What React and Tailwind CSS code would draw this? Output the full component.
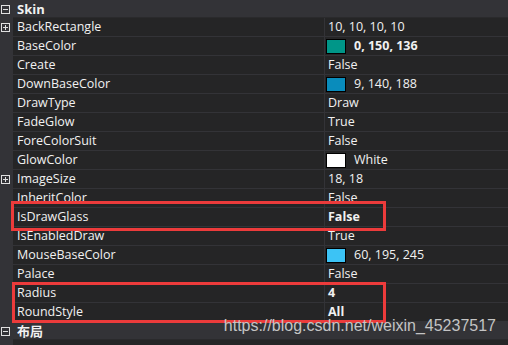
import React from "react";

const rows = [
  { k: "BackRectangle", v: "10, 10, 10, 10", plus: true },
  { k: "BaseColor", v: "0, 150, 136", c: "#009688", bold: true },
  { k: "Create", v: "False" },
  { k: "DownBaseColor", v: "9, 140, 188", c: "#098cbc" },
  { k: "DrawType", v: "Draw" },
  { k: "FadeGlow", v: "True" },
  { k: "ForeColorSuit", v: "False" },
  { k: "GlowColor", v: "White", c: "#ffffff" },
  { k: "ImageSize", v: "18, 18", plus: true },
  { k: "InheritColor", v: "False" },
  { k: "IsDrawGlass", v: "False", bold: true },
  { k: "IsEnabledDraw", v: "True" },
  { k: "MouseBaseColor", v: "60, 195, 245", c: "#3cc3f5" },
  { k: "Palace", v: "False" },
  { k: "Radius", v: "4", bold: true },
  { k: "RoundStyle", v: "All", bold: true },
];

function BoxIcon({ plus }) {
  return (
    <div className="w-[9px] h-[9px] border border-[#e0e0e0] flex items-center justify-center relative">
      <div className="w-[5px] h-[1px] bg-[#e0e0e0]" />
      {plus && <div className="absolute w-[1px] h-[5px] bg-[#e0e0e0]" />}
    </div>
  );
}

function Header({ title }) {
  return (
    <div className="flex h-[18px] shrink-0">
      <div className="w-[13px] bg-[#333337] flex items-center pl-[1px]">
        <BoxIcon />
      </div>
      <div className="flex-1 bg-[#333337] border-b border-[#2a2a2c] flex items-center pl-[4px] pt-[1px] font-bold text-[13px] text-[#f1f1f1]">
        {title}
      </div>
    </div>
  );
}

function Row({ r }) {
  return (
    <div className="flex h-[19px] shrink-0">
      <div className="w-[13px] bg-[#333337] flex items-center pl-[1px]">
        {r.plus && <BoxIcon plus />}
      </div>
      <div className="flex-1 flex border-b border-[#333337]">
        <div className="w-[312px] pl-[4px] pt-[1px] flex items-center border-r border-[#333337] text-[#f1f1f1]">
          {r.k}
        </div>
        <div className={`flex-1 flex items-center text-[#f1f1f1] ${r.c ? "pl-[1px]" : "pl-[3px] pt-[1px]"} ${r.bold ? "font-bold" : ""}`}>
          {r.c && (
            <div className="w-[20px] h-[15px] border border-black mr-[8px]" style={{ background: r.c }} />
          )}
          <span className={r.c ? "pt-[1px]" : ""}>{r.v}</span>
        </div>
      </div>
    </div>
  );
}

export default function App() {
  return (
    <div
      className="relative w-[508px] h-[345px] overflow-hidden bg-[#252526] flex flex-col text-[12.5px] leading-none"
      style={{ fontFamily: '"Open Sans", "Noto Sans CJK SC", sans-serif' }}
    >
      <Header title="Skin" />
      {rows.map((r) => (
        <Row key={r.k} r={r} />
      ))}
      <Header title="布局" />
      <div className="flex-1 flex">
        <div className="w-[13px] bg-[#333337]" />
      </div>

      <div className="absolute left-[11px] top-[201px] w-[375px] h-[30px] border-[3px] border-[#ec3b3b]" />
      <div className="absolute left-[12px] top-[282px] w-[374px] h-[41px] border-[3px] border-[#ec3b3b]" />

      <div
        className="absolute right-[12px] top-[318px] text-[16px] leading-[16px] text-[#c4c4c4]"
        style={{ fontFamily: '"Liberation Sans", Arial, sans-serif' }}
      >
        https://blog.csdn.net/weixin_45237517
      </div>
    </div>
  );
}
